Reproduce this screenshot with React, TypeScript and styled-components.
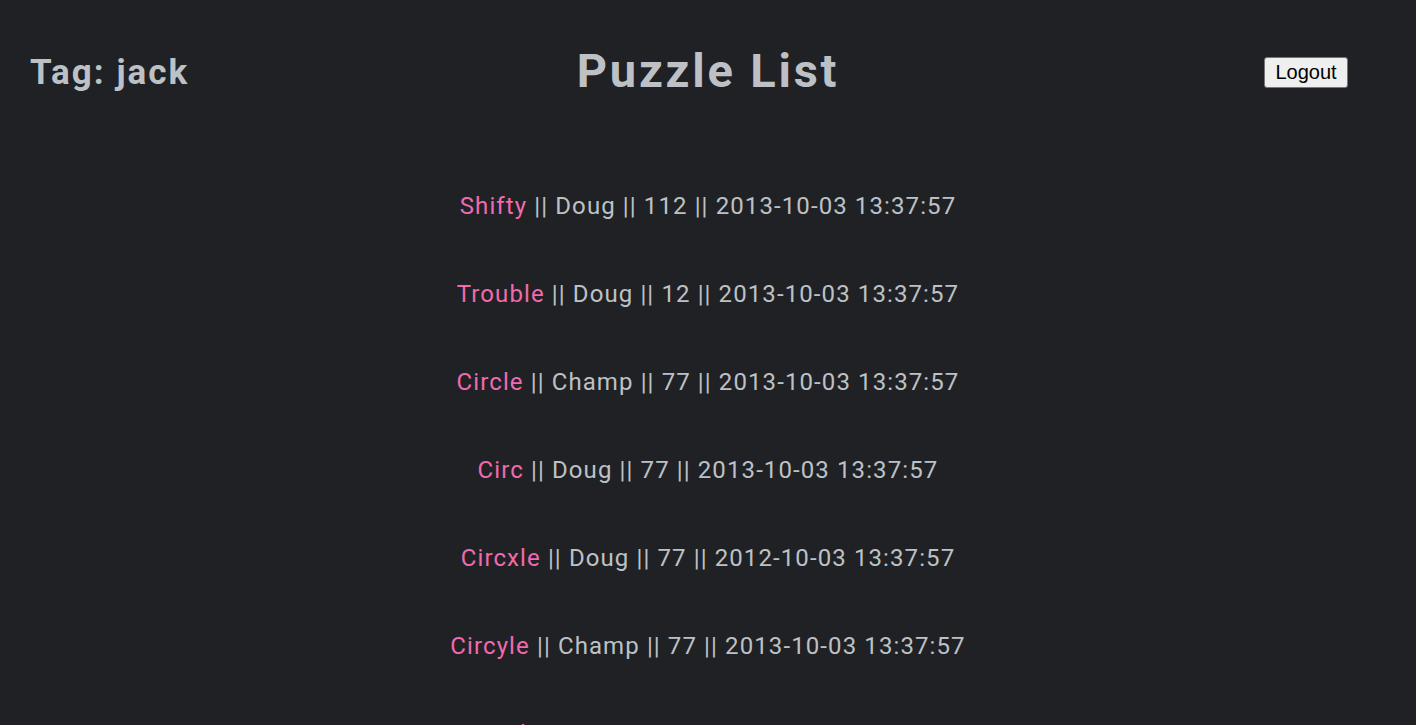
import React from "react";
import styled, { createGlobalStyle } from "styled-components";

const GlobalStyle = createGlobalStyle`
  html, body {
    margin: 0;
    padding: 0;
    background: #202124;
  }
  body {
    font-family: Roboto, "Liberation Sans", sans-serif;
    color: #bdc1c6;
    overflow: hidden;
  }
`;

const Page = styled.div`
  min-height: 725px;
  background: #202124;
`;

const Header = styled.header`
  display: grid;
  grid-template-columns: 1fr auto 1fr;
  align-items: center;
  height: 140px;
`;

const Tag = styled.h2`
  margin: 0 0 0 30px;
  font-size: 35px;
  font-weight: 700;
  letter-spacing: 2px;
  color: #bdc1c6;
  justify-self: start;
  padding-top: 4px;
`;

const Title = styled.h1`
  margin: 0;
  font-size: 47px;
  font-weight: 700;
  letter-spacing: 2.8px;
  color: #bdc1c6;
`;

const LogoutButton = styled.button`
  justify-self: end;
  margin-right: 68px;
  margin-top: 4px;
  width: 84px;
  height: 31px;
  padding: 0;
  font-family: Arial, "Liberation Sans", sans-serif;
  font-size: 20px;
  color: #000;
  background: #efefef;
  border: 1px solid #767676;
  border-radius: 3px;
`;

const List = styled.ul`
  list-style: none;
  margin: 0;
  padding: 52px 0 0;
  display: flex;
  flex-direction: column;
  align-items: center;
  gap: 60px;
`;

const Row = styled.li`
  font-size: 24px;
  line-height: 28px;
  height: 28px;
  letter-spacing: 1.1px;
  color: #bdc1c6;
  white-space: nowrap;
`;

const Name = styled.a`
  color: #f06aae;
  text-decoration: none;
`;

const puzzles = [
  { name: "Shifty", author: "Doug", score: 112, date: "2013-10-03 13:37:57" },
  { name: "Trouble", author: "Doug", score: 12, date: "2013-10-03 13:37:57" },
  { name: "Circle", author: "Champ", score: 77, date: "2013-10-03 13:37:57" },
  { name: "Circ", author: "Doug", score: 77, date: "2013-10-03 13:37:57" },
  { name: "Circxle", author: "Doug", score: 77, date: "2012-10-03 13:37:57" },
  { name: "Circyle", author: "Champ", score: 77, date: "2013-10-03 13:37:57" },
  { name: "Circzle", author: "Doug", score: 77, date: "2013-10-03 13:37:57" },
];

export default function App() {
  return (
    <Page>
      <GlobalStyle />
      <Header>
        <Tag>Tag: jack</Tag>
        <Title>Puzzle List</Title>
        <LogoutButton>Logout</LogoutButton>
      </Header>
      <List>
        {puzzles.map((p, i) => (
          <Row key={i}>
            <Name href="#">{p.name}</Name> || {p.author} || {p.score} || {p.date}
          </Row>
        ))}
      </List>
    </Page>
  );
}
